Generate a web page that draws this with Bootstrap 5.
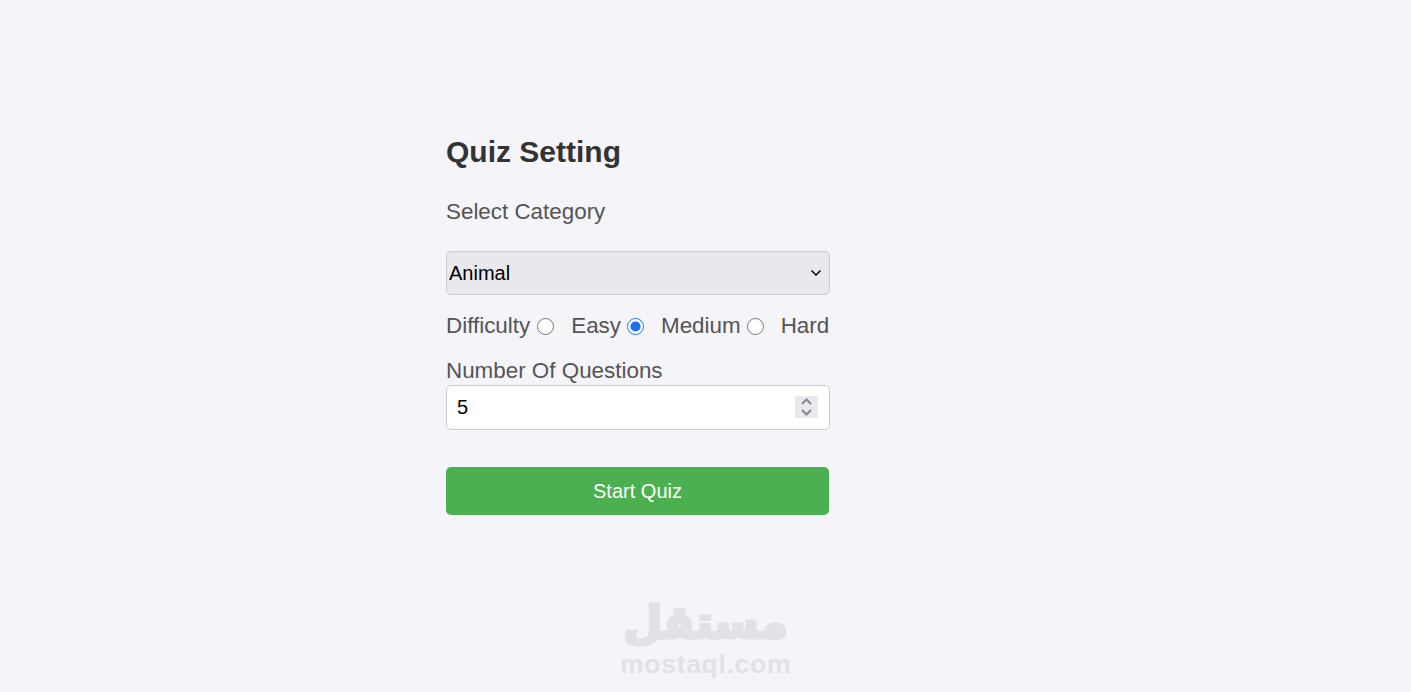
<!DOCTYPE html>
<html lang="en">
<head>
<meta charset="utf-8">
<title>Quiz Setting</title>
<link href="https://cdn.jsdelivr.net/npm/bootstrap@5.3.0/dist/css/bootstrap.min.css" rel="stylesheet">
<style>
html,body{height:100%}
body{background:#f4f4f9;font-family:"Liberation Sans",Arial,sans-serif;position:relative;overflow:hidden}
.quiz-shell{width:384px;margin-left:446px;padding-top:134px}
.quiz-title{font-size:30px;font-weight:700;color:#333;line-height:36px;margin:0 0 29px}
.quiz-label{font-size:22.4px;line-height:26px;color:#555;margin:0}
.quiz-select{display:block;width:100%;height:44px;font-size:20px;font-family:"Liberation Sans",Arial,sans-serif;color:#000;border:1px solid #ccc;border-radius:5px;margin-top:26px;padding:0 0 0 2px;appearance:none;-webkit-appearance:none;background:#e9e9ed url("data:image/svg+xml,%3Csvg xmlns='http://www.w3.org/2000/svg' width='12' height='8' viewBox='0 0 12 8'%3E%3Cpath d='M1.500 1.500l4.500 4.500 4.500-4.500' fill='none' stroke='%23000' stroke-width='1.500'/%3E%3C/svg%3E") no-repeat right 7px center}
.diff-row{margin-top:18px;height:26px}
.diff-row input.diff-a{width:17px;height:17px;margin:0 17px 0 6px;flex:none;accent-color:#1a73e8}
.diff-row .diff-lead{margin-right:1px}
.diff-row .quiz-label{white-space:nowrap}
.num-wrap{margin-top:19px}
.quiz-number{display:block;width:100%;height:45px;font-size:20px;font-family:"Liberation Sans",Arial,sans-serif;color:#000;background:#fff;border:1px solid #ccc;border-radius:5px;padding:0 11px 0 10px;margin-top:1px}
.quiz-number::-webkit-inner-spin-button{-webkit-appearance:none;appearance:none;opacity:1;width:23px;height:22px;background:#e9e9ed url("data:image/svg+xml,%3Csvg xmlns='http://www.w3.org/2000/svg' width='23' height='22' viewBox='0 0 23 22'%3E%3Cpath d='M7 8l4.500-4.500 4.500 4.500M7 14l4.500 4.500 4.500-4.500' fill='none' stroke='%23888' stroke-width='2'/%3E%3C/svg%3E") no-repeat center}
.quiz-start{display:block;width:383px;height:48px;margin-top:37px;background:#4caf50;color:#fff;border:0;border-radius:5px;font-size:20px;font-family:"Liberation Sans",Arial,sans-serif}
.quiz-start:hover{background:#4caf50;color:#fff}
.mark-logo{position:absolute;left:620px;top:598px;width:171px;text-align:center;color:#e2e2e6;line-height:1;pointer-events:none}
.mark-ar{font-family:"DejaVu Sans",sans-serif;font-weight:700;font-size:45px;line-height:50px;height:52px;white-space:nowrap;-webkit-text-stroke:3px #e2e2e6}
.mark-en{font-weight:700;font-size:26.7px;line-height:28px;letter-spacing:.6px;white-space:nowrap}
</style>
</head>
<body>
<main class="quiz-shell">
  <h1 class="quiz-title">Quiz Setting</h1>
  <label class="quiz-label d-block" for="cat">Select Category</label>
  <select id="cat" class="quiz-select"><option>Animal</option><option>Sports</option><option>History</option></select>
  <div class="diff-row d-flex align-items-center">
    <span class="quiz-label diff-lead">Difficulty</span>
    <input class="diff-a" type="radio" name="d" id="e">
    <label class="quiz-label" for="e">Easy</label>
    <input class="diff-a" type="radio" name="d" id="m" checked>
    <label class="quiz-label" for="m">Medium</label>
    <input class="diff-a" type="radio" name="d" id="h">
    <label class="quiz-label" for="h">Hard</label>
  </div>
  <div class="num-wrap">
    <label class="quiz-label d-block" for="n">Number Of Questions</label>
    <input id="n" class="quiz-number" type="number" value="5">
  </div>
  <button type="button" class="btn quiz-start">Start Quiz</button>
</main>
<div class="mark-logo" aria-hidden="true">
  <div class="mark-ar" dir="rtl">مستقل</div>
  <div class="mark-en">mostaql.com</div>
</div>
<script src="https://cdn.jsdelivr.net/npm/bootstrap@5.3.0/dist/js/bootstrap.bundle.min.js"></script>
</body>
</html>
